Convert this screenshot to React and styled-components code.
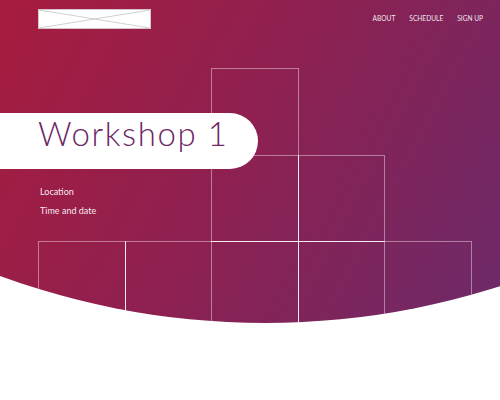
import React from "react";
import styled, { createGlobalStyle } from "styled-components";

const Global = createGlobalStyle`
  html, body { margin: 0; padding: 0; background: #ffffff; }
  body { font-family: "Lato", "Open Sans", sans-serif; }
  * { box-sizing: border-box; }
`;

const Page = styled.div`
  width: 500px;
  height: 400px;
  background: #ffffff;
  overflow: hidden;
`;

const Hero = styled.section`
  position: relative;
  height: 330px;
  background: linear-gradient(118deg, #a71c3e 0%, #8f2050 45%, #6c2a69 100%);
  clip-path: circle(770px at 265px -447px);
`;

const Decor = styled.div`
  position: absolute;
  left: 38px;
  top: 68px;
  display: grid;
  grid-template-columns: repeat(5, 86.6px);
  grid-template-rows: repeat(3, 86.6px);
  pointer-events: none;
`;

const line = (v) =>
  v === "b"
    ? "1px solid rgba(255,255,255,0.92)"
    : v === "f"
    ? "1px solid rgba(255,255,255,0.42)"
    : "none";

const Cell = styled.div`
  grid-column: ${(p) => p.$c};
  grid-row: ${(p) => p.$r};
  border-top: ${(p) => line(p.$t)};
  border-left: ${(p) => line(p.$l)};
  border-right: ${(p) => line(p.$rt)};
  margin-right: ${(p) => (p.$rt !== "n" ? "-1px" : "0")};
`;

const Content = styled.div`
  position: relative;
  display: flex;
  flex-direction: column;
`;

const Header = styled.header`
  display: flex;
  justify-content: space-between;
  align-items: flex-start;
  padding: 9px 17px 0 38px;
  height: 113px;
`;

const Logo = styled.svg`
  display: block;
  width: 113px;
  height: 20px;
`;

const Nav = styled.nav`
  display: flex;
  gap: 14px;
  padding-top: 5px;
`;

const NavLink = styled.a`
  font-family: "Lato", sans-serif;
  font-weight: 400;
  font-size: 6.6px;
  color: rgba(255, 255, 255, 0.92);
  text-transform: uppercase;
  text-decoration: none;
  line-height: 9px;
`;

const Pill = styled.div`
  width: 258px;
  height: 56px;
  background: #ffffff;
  border-radius: 0 28px 28px 0;
  display: flex;
  align-items: flex-start;
  padding: 4px 0 0 38px;
`;

const Title = styled.h1`
  margin: 0;
  font-family: "Lato", sans-serif;
  font-weight: 300;
  font-size: 33px;
  letter-spacing: 1.6px;
  color: #6d2865;
  line-height: 1;
`;

const Details = styled.div`
  display: flex;
  flex-direction: column;
  gap: 8px;
  padding: 17px 0 0 40px;
`;

const Detail = styled.p`
  margin: 0;
  font-family: "Lato", sans-serif;
  font-size: 9px;
  line-height: 11px;
  color: rgba(255, 255, 255, 0.95);
`;

export default function App() {
  return (
    <Page>
      <Global />
      <Hero>
        <Decor>
          <Cell $c={3} $r={1} $t="f" $l="f" $rt="f" />
          <Cell $c={3} $r={2} $t="f" $l="f" $rt="b" />
          <Cell $c={4} $r={2} $t="f" $l="n" $rt="f" />
          <Cell $c={1} $r={3} $t="f" $l="f" $rt="b" />
          <Cell $c={2} $r={3} $t="f" $l="n" $rt="f" />
          <Cell $c={3} $r={3} $t="b" $l="n" $rt="b" />
          <Cell $c={4} $r={3} $t="b" $l="n" $rt="f" />
          <Cell $c={5} $r={3} $t="f" $l="n" $rt="f" />
        </Decor>
        <Content>
          <Header>
            <Logo viewBox="0 0 113 20">
              <rect x="0.5" y="0.5" width="112" height="19" fill="#ffffff" stroke="#d6c6cb" />
              <line x1="1" y1="1" x2="112" y2="19" stroke="#c4c4c4" strokeWidth="0.8" />
              <line x1="1" y1="19" x2="112" y2="1" stroke="#c4c4c4" strokeWidth="0.8" />
            </Logo>
            <Nav>
              <NavLink href="#">About</NavLink>
              <NavLink href="#">Schedule</NavLink>
              <NavLink href="#">Sign up</NavLink>
            </Nav>
          </Header>
          <Pill>
            <Title>Workshop 1</Title>
          </Pill>
          <Details>
            <Detail>Location</Detail>
            <Detail>Time and date</Detail>
          </Details>
        </Content>
      </Hero>
    </Page>
  );
}
